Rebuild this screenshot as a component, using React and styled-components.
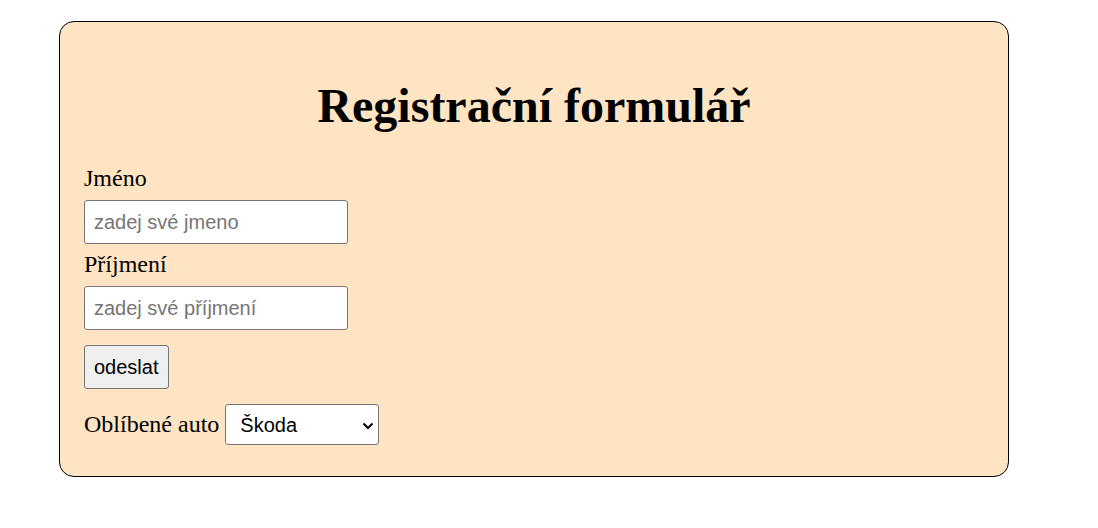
import React, { useState } from "react";
import styled, { createGlobalStyle } from "styled-components";

const GlobalStyle = createGlobalStyle`
  body {
    margin: 8px;
    background: #ffffff;
    font-family: "Liberation Serif", "Times New Roman", serif;
    color: #000;
  }
`;

const Card = styled.form`
  box-sizing: border-box;
  width: 950px;
  margin: 13px 0 0 51px;
  padding: 24px 24px 31px;
  background: bisque;
  border: 1px solid #000;
  border-radius: 15px;
  display: flex;
  flex-direction: column;
  align-items: flex-start;
`;

const Title = styled.h1`
  align-self: stretch;
  margin: 32px 0;
  text-align: center;
  font-size: 48px;
  font-weight: bold;
  line-height: 55px;
`;

const Label = styled.label`
  font-size: 24px;
  line-height: 27px;
`;

const Field = styled.input`
  box-sizing: border-box;
  width: 264px;
  height: 44px;
  margin: ${(p) => (p.$last ? "8px 0 0" : "8px 0 7px")};
  padding: 0 9px;
  font-family: "Liberation Sans", Arial, sans-serif;
  font-size: 20px;
  color: #000;
  background: #fff;
  border: 1px solid #767676;
  border-radius: 3px;
  outline: none;

  &::placeholder {
    color: #757575;
  }
`;

const Submit = styled.button`
  box-sizing: border-box;
  height: 44px;
  margin-top: 15px;
  padding: 0 9px;
  font-family: "Liberation Sans", Arial, sans-serif;
  font-size: 20px;
  color: #000;
  background: #efefef;
  border: 1px solid #767676;
  border-radius: 3px;
`;

const Row = styled.div`
  display: flex;
  align-items: center;
  gap: 6px;
  margin-top: 15px;
`;

const SelectWrap = styled.div`
  position: relative;
  width: 154px;
  height: 41px;
`;

const Select = styled.select`
  box-sizing: border-box;
  width: 100%;
  height: 100%;
  padding: 0 30px 0 14px;
  appearance: none;
  font-family: "Liberation Sans", Arial, sans-serif;
  font-size: 20px;
  color: #000;
  background: #fff;
  border: 1px solid #767676;
  border-radius: 3px;
  outline: none;
`;

const Chevron = styled.svg`
  position: absolute;
  right: 5px;
  top: 50%;
  width: 12px;
  height: 8px;
  margin-top: -3px;
  pointer-events: none;
`;

export default function App() {
  const [car, setCar] = useState("skoda");

  return (
    <>
      <GlobalStyle />
      <Card onSubmit={(e) => e.preventDefault()}>
        <Title>Registrační formulář</Title>
        <Label htmlFor="jmeno">Jméno</Label>
        <Field id="jmeno" placeholder="zadej své jmeno" />
        <Label htmlFor="prijmeni">Příjmení</Label>
        <Field id="prijmeni" placeholder="zadej své příjmení" $last />
        <Submit type="submit">odeslat</Submit>
        <Row>
          <Label htmlFor="auto">Oblíbené auto</Label>
          <SelectWrap>
            <Select id="auto" value={car} onChange={(e) => setCar(e.target.value)}>
              <option value="skoda">Škoda</option>
              <option value="bmw">BMW</option>
              <option value="audi">Audi</option>
            </Select>
            <Chevron viewBox="0 0 12 8">
              <path d="M1.5 1.5 L6 6 L10.5 1.5" fill="none" stroke="#000" strokeWidth="2" />
            </Chevron>
          </SelectWrap>
        </Row>
      </Card>
    </>
  );
}
